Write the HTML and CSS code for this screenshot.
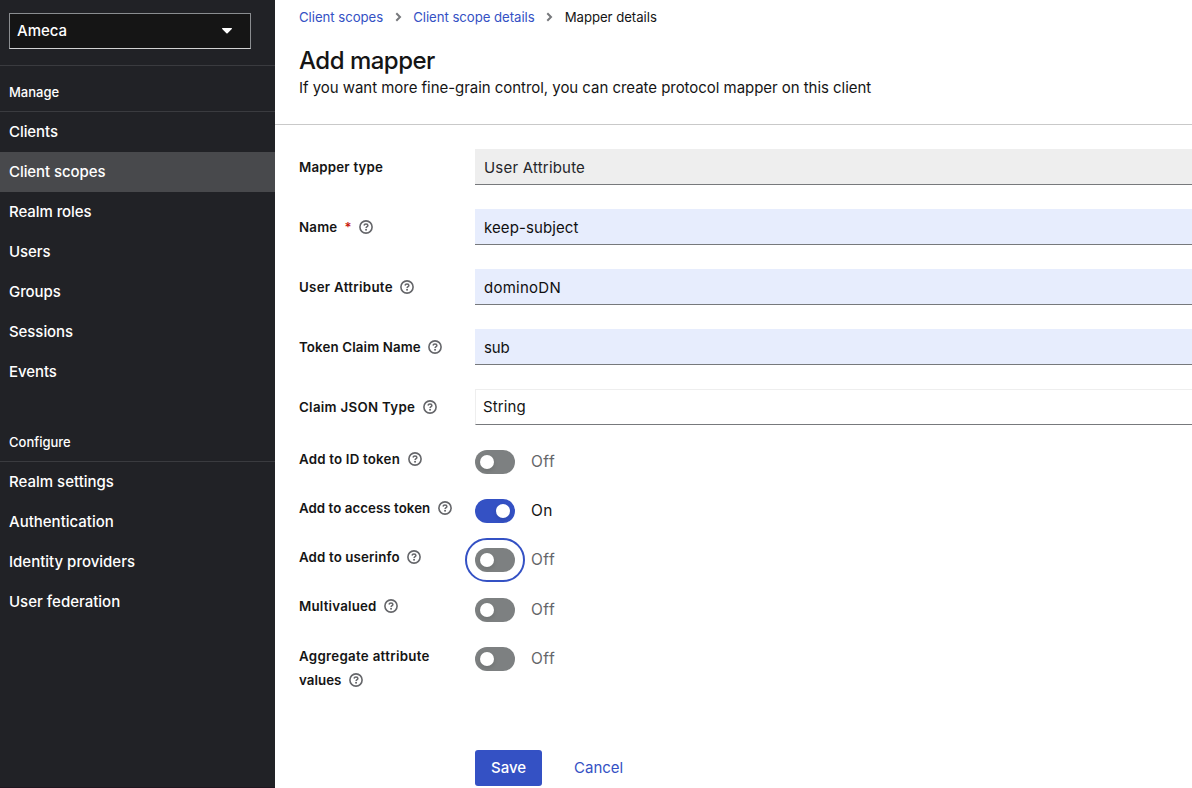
FILE: index.html
```html
<!DOCTYPE html>
<html lang="en">
<head>
<meta charset="utf-8">
<title>Add mapper</title>
<link rel="stylesheet" href="styles.css">
</head>
<body>
<svg class="defs" aria-hidden="true">
  <symbol id="help" viewBox="0 0 14 14">
    <circle cx="7" cy="7" r="6.1" fill="none" stroke="currentColor" stroke-width="1.6"/>
    <path d="M5 5.5C5.2 4.4 6 4 7 4c1.1 0 1.9.6 1.9 1.4C8.9 6.6 7.1 6.6 7.1 7.9" fill="none" stroke="currentColor" stroke-width="1.5"/>
    <circle cx="7.05" cy="9.8" r="1" fill="currentColor"/>
  </symbol>
  <symbol id="chevron" viewBox="0 0 7 10">
    <path d="M1.3 1.3 5 5 1.3 8.7" fill="none" stroke="currentColor" stroke-width="2"/>
  </symbol>
</svg>
<div class="page">
  <nav class="sidebar">
    <div class="realm">
      <div class="realm-select"><span>Ameca</span>
        <svg class="caret" viewBox="0 0 10 6"><path d="M.7 0h8.6c.7 0 .9.7.5 1.1L5.6 5.3c-.3.4-.9.4-1.2 0L.2 1.1C-.2.7 0 0 .7 0z" fill="#fff"/></svg>
      </div>
    </div>
    <h2 class="group-title">Manage</h2>
    <ul class="nav-list">
      <li>Clients</li>
      <li class="active">Client scopes</li>
      <li>Realm roles</li>
      <li>Users</li>
      <li>Groups</li>
      <li>Sessions</li>
      <li>Events</li>
    </ul>
    <h2 class="group-title configure">Configure</h2>
    <ul class="nav-list config-list">
      <li>Realm settings</li>
      <li>Authentication</li>
      <li>Identity providers</li>
      <li>User federation</li>
    </ul>
  </nav>
  <main class="main">
    <header class="header">
      <div class="breadcrumb">
        <a>Client scopes</a><svg class="chevron"><use href="#chevron"/></svg><a>Client scope details</a><svg class="chevron"><use href="#chevron"/></svg><span>Mapper details</span>
      </div>
      <h1 class="title">Add mapper</h1>
      <p class="subtitle">If you want more fine-grain control, you can create protocol mapper on this client</p>
    </header>
    <form class="form">
      <div class="row"><div class="label loose"><span>Mapper type</span></div><div class="input readonly">User Attribute</div></div>
      <div class="row"><div class="label loose"><span>Name</span><span class="required">*</span><svg class="help"><use href="#help"/></svg></div><div class="input filled">keep-subject</div></div>
      <div class="row"><div class="label looser"><span>User Attribute</span><svg class="help"><use href="#help"/></svg></div><div class="input filled wide">dominoDN</div></div>
      <div class="row"><div class="label snug"><span>Token Claim Name</span><svg class="help"><use href="#help"/></svg></div><div class="input filled tight">sub</div></div>
      <div class="row"><div class="label looser"><span>Claim JSON Type</span><svg class="help"><use href="#help"/></svg></div><div class="input select">String</div></div>
      <div class="switches">
        <div class="switch-row"><div class="label loose"><span>Add to ID token</span><svg class="help"><use href="#help"/></svg></div><div class="switch"><i class="toggle"></i><span>Off</span></div></div>
        <div class="switch-row"><div class="label"><span>Add to access token</span><svg class="help"><use href="#help"/></svg></div><div class="switch on"><i class="toggle"></i><span>On</span></div></div>
        <div class="switch-row"><div class="label snug"><span>Add to userinfo</span><svg class="help"><use href="#help"/></svg></div><div class="switch"><i class="toggle focus"></i><span>Off</span></div></div>
        <div class="switch-row"><div class="label loose short"><span>Multivalued</span><svg class="help"><use href="#help"/></svg></div><div class="switch"><i class="toggle"></i><span>Off</span></div></div>
        <div class="switch-row"><div class="label multi"><span class="looser">Aggregate attribute</span> <span>values</span><svg class="help"><use href="#help"/></svg></div><div class="switch"><i class="toggle"></i><span>Off</span></div></div>
      </div>
      <div class="actions"><button type="button" class="save">Save</button><button type="button" class="cancel">Cancel</button></div>
    </form>
  </main>
</div>
</body>
</html>
```

FILE: styles.css
```css
* { box-sizing: border-box; }
body { margin: 0; overflow: hidden; font-family: Inter, "Liberation Sans", sans-serif; font-size: 15px; line-height: 24px; color: #151515; background: #fff; }
.defs { display: none; }
.page { display: flex; height: 788px; }
.sidebar { width: 275px; flex: none; background: #212226; color: #fff; border-bottom: 1px solid #1f1720; font-weight: 500; }
.realm { height: 66px; padding: 13px 24px 0 9px; border-bottom: 1px solid #3a3b3f; }
.realm-select { height: 36px; border: 1px solid #8a8d90; border-bottom-color: #d2d2d2; background: #151515; padding: 0 18px 0 7px; display: flex; align-items: center; justify-content: space-between; }
.caret { width: 10px; height: 6px; }
.group-title { margin: 0; height: 46px; padding: 14px 9px 0; border-bottom: 1px solid #3a3b3f; font-size: 13px; line-height: 24px; font-weight: 500; }
.configure { margin-top: 24px; }
.nav-list { margin: 0; padding: 0; list-style: none; letter-spacing: -0.07px; }
.config-list { letter-spacing: 0; }
.nav-list li { height: 40px; padding: 8px 9px; }
.nav-list .active { background: #48494c; }
.main { flex: 1; min-width: 0; overflow: hidden; }
.header { height: 125px; padding: 5px 24px 0; border-bottom: 1px solid #c9c9c9; }
.breadcrumb { display: flex; align-items: center; font-size: 13.2px; line-height: 24px; letter-spacing: -0.04px; }
.breadcrumb a { color: #3451c4; }
.chevron { width: 7px; height: 10px; margin: 0 11.5px; color: #77797c; }
.title { margin: 17px 0 0; font-size: 24px; line-height: 30px; font-weight: 500; letter-spacing: -0.5px; }
.subtitle { margin: 0; line-height: 24px; white-space: nowrap; letter-spacing: -0.04px; }
.form { padding: 24px 0 0 24px; }
.row { display: grid; grid-template-columns: 176px 1fr; height: 36px; margin-bottom: 24px; }
.label { display: flex; align-items: center; font-size: 13.3px; font-weight: 600; line-height: 24px; letter-spacing: 0.05px; }
.snug { letter-spacing: 0.13px; }
.loose { letter-spacing: 0.2px; }
.looser { letter-spacing: 0.3px; }
.help { width: 14px; height: 14px; margin-left: 7.5px; color: #65666a; flex: none; }
.required { color: #c9190b; margin-left: 7px; font-size: 13px; }
.input { height: 36px; padding: 7px 9px 4px; border-bottom: 1px solid #77797c; letter-spacing: 0.1px; }
.readonly { background: #eee; color: #25262a; letter-spacing: 0.2px; }
.filled { background: #e7edfd; color: #101010; }
.wide { letter-spacing: 0.25px; }
.tight { letter-spacing: -0.2px; }
.select { border-top: 1px solid #eee; border-left: 1px solid #eee; padding: 5px 7px; }
.switches { height: 301px; padding-top: 0.9px; }
.switch-row { display: grid; grid-template-columns: 176px 1fr; height: 49.25px; }
.switch-row .label { height: 18px; }
.switch-row .short { height: 16px; }
.switch-row .multi { display: block; width: 150px; margin-top: -3px; }
.multi .help { vertical-align: -2px; }
.switch { display: flex; align-items: center; height: 24px; gap: 16px; color: #65666a; font-size: 15.5px; letter-spacing: 0.5px; }
.toggle { width: 40px; height: 24px; border-radius: 12px; background: #7d8081; padding: 5px; flex: none; }
.toggle::before { content: ""; display: block; width: 14px; height: 14px; border-radius: 50%; background: #fff; box-shadow: 0 2px 4px rgba(0,0,0,.12); }
.on { color: #151515; }
.on .toggle { background: #3451c4; padding-left: 21px; }
.focus { outline: 2px solid #3451c4; outline-offset: 8px; }
.actions { display: flex; gap: 16px; padding-left: 176px; }
.actions button { height: 36px; padding: 0 16px; border: 0; border-radius: 3px; font: inherit; color: #3451c4; background: none; }
.actions .save { width: 67px; background: #3451c4; color: #fff; font-weight: 500; }
```
